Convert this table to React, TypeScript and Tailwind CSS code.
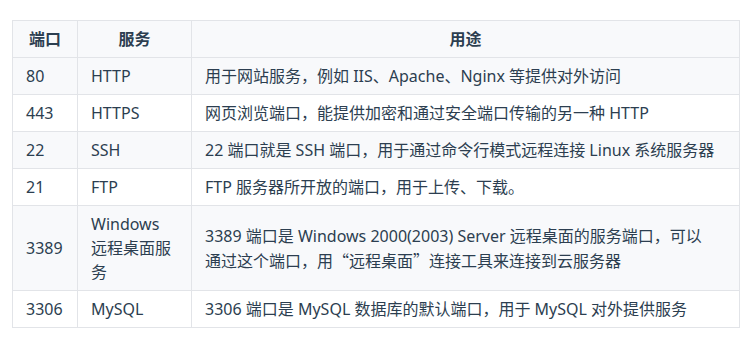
const cjk = '"Noto Sans CJK SC", sans-serif';

const rows: { port: string; service: React.ReactNode; use: React.ReactNode }[] = [
  { port: '80', service: 'HTTP', use: '用于网站服务，例如 IIS、Apache、Nginx 等提供对外访问' },
  { port: '443', service: 'HTTPS', use: '网页浏览端口，能提供加密和通过安全端口传输的另一种 HTTP' },
  { port: '22', service: 'SSH', use: '22 端口就是 SSH 端口，用于通过命令行模式远程连接 Linux 系统服务器' },
  { port: '21', service: 'FTP', use: 'FTP 服务器所开放的端口，用于上传、下载。' },
  {
    port: '3389',
    service: (
      <>
        Windows
        <br />
        远程桌面服
        <br />务
      </>
    ),
    use: (
      <>
        3389 端口是 Windows 2000(2003) Server 远程桌面的服务端口，可以
        <br />
        通过这个端口，用<span style={{ fontFamily: cjk }}>“</span>远程桌面
        <span style={{ fontFamily: cjk }}>”</span>连接工具来连接到云服务器
      </>
    ),
  },
  { port: '3306', service: 'MySQL', use: '3306 端口是 MySQL 数据库的默认端口，用于 MySQL 对外提供服务' },
];

export default function App() {
  return (
    <div
      className="w-[750px] h-[337px] bg-white pt-[20px] pl-[12px] text-[16px] leading-[24px] text-[#2c3e50]"
      style={{ fontFamily: '"Noto Sans", "Noto Sans CJK SC", sans-serif' }}
    >
      <table className="w-[728px] table-fixed border-collapse">
        <colgroup>
          <col className="w-[65px]" />
          <col className="w-[114px]" />
          <col />
        </colgroup>
        <thead>
          <tr className="bg-[#f8f9fb]">
            <th className="border border-[#e2e4e8] px-[13px] py-[6px] text-center font-bold">端口</th>
            <th className="border border-[#e2e4e8] px-[13px] py-[6px] text-center font-bold">服务</th>
            <th className="border border-[#e2e4e8] px-[13px] py-[6px] text-center font-bold">用途</th>
          </tr>
        </thead>
        <tbody>
          {rows.map((r, i) => (
            <tr key={r.port} className={i % 2 === 0 ? 'bg-[#f8f9fb]' : 'bg-white'}>
              <td className="border border-[#e2e4e8] px-[13px] py-[6px] align-middle">{r.port}</td>
              <td className="border border-[#e2e4e8] px-[13px] py-[6px] align-middle">{r.service}</td>
              <td className="border border-[#e2e4e8] px-[13px] py-[6px] align-middle whitespace-nowrap">{r.use}</td>
            </tr>
          ))}
        </tbody>
      </table>
    </div>
  );
}
